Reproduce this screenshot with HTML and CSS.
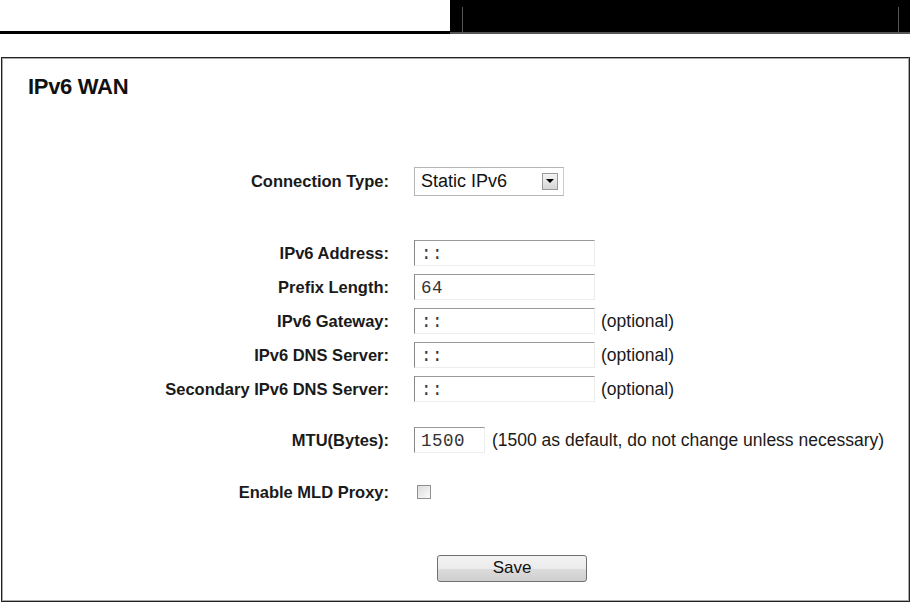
FILE: index.html
```html
<!DOCTYPE html>
<html>
<head>
<meta charset="utf-8">
<title>IPv6 WAN</title>
<link rel="stylesheet" href="styles.css">
</head>
<body>
<div class="topbar">
  <div class="topbar-left"></div>
  <div class="topbar-right"><div class="topbar-inner"></div></div>
</div>
<div class="panel">
  <h1 class="title">IPv6 WAN</h1>
  <div class="form">
    <div class="row row-conn">
      <label class="lbl">Connection Type:</label>
      <div class="select">
        <span class="select-text">Static IPv6</span>
        <span class="select-btn"><span class="tri"></span></span>
      </div>
    </div>
    <div class="group">
      <div class="row">
        <label class="lbl">IPv6 Address:</label>
        <input class="field" type="text" value="::">
      </div>
      <div class="row">
        <label class="lbl">Prefix Length:</label>
        <input class="field" type="text" value="64">
      </div>
      <div class="row">
        <label class="lbl">IPv6 Gateway:</label>
        <input class="field" type="text" value="::">
        <span class="note">(optional)</span>
      </div>
      <div class="row">
        <label class="lbl">IPv6 DNS Server:</label>
        <input class="field" type="text" value="::">
        <span class="note">(optional)</span>
      </div>
      <div class="row">
        <label class="lbl">Secondary IPv6 DNS Server:</label>
        <input class="field" type="text" value="::">
        <span class="note">(optional)</span>
      </div>
    </div>
    <div class="row row-mtu">
      <label class="lbl">MTU(Bytes):</label>
      <input class="field field-short" type="text" value="1500">
      <span class="note note-mtu">(1500 as default, do not change unless necessary)</span>
    </div>
    <div class="row row-mld">
      <label class="lbl">Enable MLD Proxy:</label>
      <span class="check"></span>
    </div>
    <div class="row row-save">
      <button class="save" type="button">Save</button>
    </div>
  </div>
</div>
</body>
</html>
```

FILE: styles.css
```css
html, body {
  margin: 0;
  padding: 0;
  background: #fff;
}
body {
  width: 918px;
  height: 613px;
  overflow: hidden;
  font-family: "Liberation Sans", Arial, sans-serif;
  color: #111;
}
.topbar {
  display: flex;
  height: 34px;
}
.topbar-left {
  width: 450px;
  border-bottom: 3px solid #000;
  box-sizing: border-box;
  height: 34px;
}
.topbar-right {
  width: 460px;
  height: 34px;
  box-sizing: border-box;
  background: #000;
  border-bottom: 2px solid #555;
  display: flex;
  align-items: flex-end;
  padding: 0 11px 0 12px;
}
.topbar-inner {
  flex: 1;
  height: 25px;
  border-left: 1px solid #555;
  border-right: 1px solid #555;
}
.panel {
  margin: 23px 0 0 1px;
  width: 909px;
  height: 545px;
  box-sizing: border-box;
  border: 1px solid #222;
  box-shadow: inset 0 0 0 1px #aaa;
  padding: 16px 0 0 2px;
}
.title {
  margin: 0 0 0 24px;
  font-size: 22px;
  line-height: 26px;
  font-weight: bold;
  color: #111;
  letter-spacing: -0.3px;
}
.form {
  margin-top: 64px;
}
.row {
  display: flex;
  align-items: center;
  height: 34px;
}
.lbl {
  width: 385px;
  text-align: right;
  font-size: 16.5px;
  font-weight: bold;
  color: #1a1a1a;
  padding-right: 25px;
  box-sizing: content-box;
  flex: none;
  letter-spacing: 0;
}
.select {
  width: 150px;
  height: 29px;
  box-sizing: border-box;
  border: 1px solid #b5b5b5;
  border-right-color: #ccc;
  display: flex;
  align-items: center;
  justify-content: space-between;
  padding: 0 5px 0 6px;
}
.select-text {
  font-size: 18px;
  color: #111;
}
.select-btn {
  width: 16px;
  height: 17px;
  box-sizing: border-box;
  border: 1px solid #9a9a9a;
  background: linear-gradient(#f4f4f4, #d6d6d6);
  display: flex;
  align-items: center;
  justify-content: center;
}
.tri {
  width: 0;
  height: 0;
  border-left: 4px solid transparent;
  border-right: 4px solid transparent;
  border-top: 4px solid #000;
}
.group {
  margin-top: 38px;
}
.field {
  width: 181px;
  height: 26px;
  box-sizing: border-box;
  margin: 0;
  padding: 2px 6px 0;
  border: 1px solid #ededed;
  border-top-color: #999;
  border-left-color: #888;
  font-family: "Liberation Mono", "Courier New", monospace;
  font-size: 17.5px;
  letter-spacing: 0.5px;
  color: #333;
  background: #fff;
  outline: none;
}
.field-short {
  width: 71px;
}
.note {
  margin-left: 6px;
  font-size: 17.5px;
  color: #1a1a1a;
}
.note-mtu {
  margin-left: 7px;
}
.row-mtu {
  margin-top: 17px;
}
.row-mld {
  margin-top: 18px;
}
.check {
  width: 14px;
  height: 14px;
  box-sizing: border-box;
  margin-left: 3px;
  border: 1px solid #8e8f8f;
  background: linear-gradient(135deg, #dcdcdc, #fbfbfb);
}
.row-save {
  margin-top: 42px;
  padding-left: 433px;
}
.save {
  width: 150px;
  height: 27px;
  margin: 0;
  padding: 0;
  border: 1px solid #707070;
  border-radius: 3px;
  background: linear-gradient(#f3f3f3 0%, #ebebeb 50%, #dcdcdc 51%, #cfcfcf 100%);
  font-family: "Liberation Sans", Arial, sans-serif;
  font-size: 17px;
  color: #111;
}
```
